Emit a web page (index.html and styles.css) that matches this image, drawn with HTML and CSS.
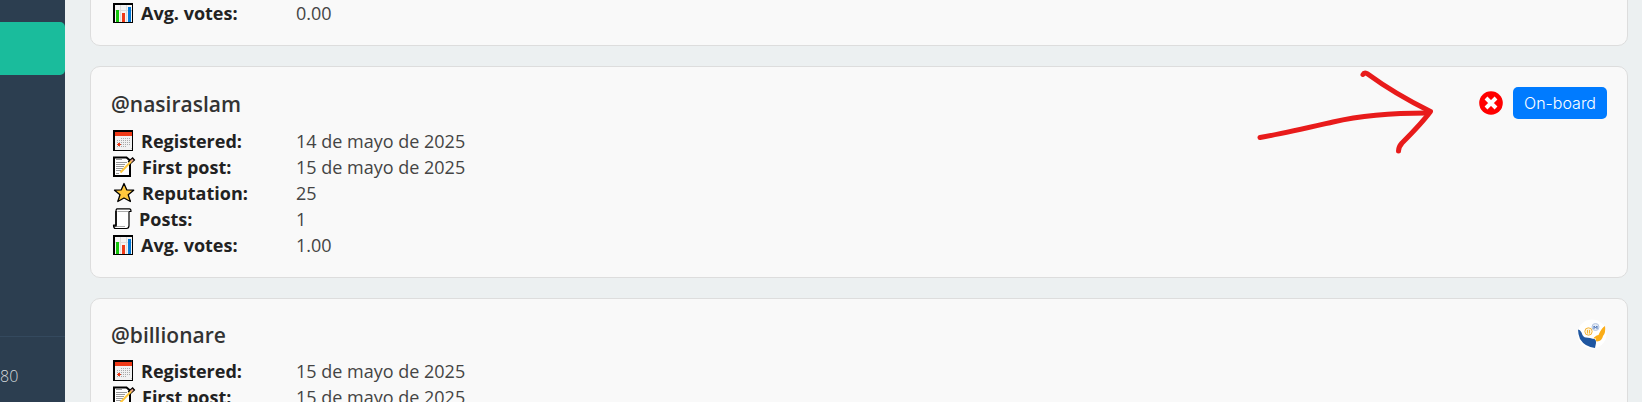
FILE: index.html
```
<!DOCTYPE html>
<html lang="es">
<head>
<meta charset="utf-8">
<title>Users</title>
<link rel="stylesheet" href="styles.css">
</head>
<body>
<svg class="sprite" aria-hidden="true">
  <symbol id="calendar" viewBox="0 0 24 22" shape-rendering="crispEdges">
    <path fill="#000" d="M2 0h20v21H2z"/>
    <path fill="#f1f1f1" d="M4 2h17v18H4z"/>
    <path fill="#f03a17" d="M4 2h17v4H4z"/>
    <path stroke="#aaa" stroke-dasharray="1 1" d="M10 8.500h10M6 10.500h14M6 12.500h14M6 14.500h14M6 16.500h10"/>
    <path fill="#f03a17" d="M6 14h4v1H6zM7 13h2v3H7z"/>
    <path fill="#ccc" d="M19 19h2v-2z"/>
  </symbol>
  <symbol id="memo" viewBox="0 0 25 22">
    <path fill="#fff" stroke="#000" stroke-width="2" d="M3 1.500h12.500L19 4.500V20H3z"/>
    <path stroke="#999" d="M5 3.500h6M5 6.500h11M5 8.500h9M5 10.500h8M5 12.500h7M5 14.500h5M5 17.500h3"/>
    <path stroke="#000" stroke-width="4" d="M18 7l5-4.500"/>
    <path stroke="#ffc83d" stroke-width="2" d="M9.500 16.500L20.500 5"/>
    <path stroke="#e8a58c" stroke-width="2" d="M20 5.500l2-2"/>
  </symbol>
  <symbol id="star" viewBox="0 0 25 22">
    <path fill="#ffc83d" stroke="#000" stroke-width="1.300" stroke-linejoin="round" d="M13 1.500l2.700 6.300 7 .4-5.500 4.500 2.200 6.800L13 16l-6.200 3.500L9 12.700 3.500 8.200l6.800-.4z"/>
  </symbol>
  <symbol id="scroll" viewBox="0 0 22 22">
    <path fill="#fff" stroke="#000" stroke-width="1.200" stroke-linejoin="round" d="M6 .8h12.500q1.500 0 1.500 2.700h-2v14q0 3-2.500 3H4.500Q2.500 20.500 2.500 17H5V3Q5 1.500 6 .8z"/>
    <path stroke="#000" stroke-width="1.500" fill="none" d="M5 3v15H2.500"/>
    <path stroke="#aaa" d="M6.500 3.500H17M6 18.500h8"/>
  </symbol>
  <symbol id="chart" viewBox="0 0 24 22" shape-rendering="crispEdges">
    <path fill="#000" d="M2 1h20v20H2z"/>
    <path fill="#f4f4f4" d="M4 3h17v17H4z"/>
    <path fill="#ddd" d="M9 3h1v17H9zM15 3h1v17h-1zM4 8h17v1H4z"/>
    <path fill="#16c60c" d="M5 8h3v12H5z"/>
    <path fill="#f03a17" d="M11 11h3v9h-3z"/>
    <path fill="#0078d7" d="M17 5h3v15h-3z"/>
  </symbol>
</svg>
<div class="layout">
  <nav class="sidebar">
    <a class="nav-active" href="#" aria-label="Users"></a>
    <div class="nav-footer">80</div>
  </nav>
  <main class="content">
    <section class="card card-first">
      <dl class="stats">
        <div class="stat"><dt><svg class="icon"><use href="#chart"/></svg>Avg. votes:</dt><dd>0.00</dd></div>
      </dl>
    </section>
    <section class="card">
      <header class="card-header">
        <h2>@nasiraslam</h2>
        <div class="actions">
          <svg class="reject" viewBox="0 0 24 24"><circle cx="12" cy="12" r="11.800" fill="#f00"/><path stroke="#fff" stroke-width="4" d="M7 7l10 10M17 7L7 17"/></svg>
          <button class="board" type="button">On-board</button>
        </div>
      </header>
      <dl class="stats">
        <div class="stat"><dt><svg class="icon"><use href="#calendar"/></svg>Registered:</dt><dd>14 de mayo de 2025</dd></div>
        <div class="stat"><dt><svg class="icon icon-wide"><use href="#memo"/></svg>First post:</dt><dd>15 de mayo de 2025</dd></div>
        <div class="stat"><dt><svg class="icon icon-wide"><use href="#star"/></svg>Reputation:</dt><dd>25</dd></div>
        <div class="stat"><dt><svg class="icon icon-narrow"><use href="#scroll"/></svg>Posts:</dt><dd>1</dd></div>
        <div class="stat"><dt><svg class="icon"><use href="#chart"/></svg>Avg. votes:</dt><dd>1.00</dd></div>
      </dl>
      <svg class="arrow" viewBox="0 0 180 90" fill="none" stroke="#e81b1b" stroke-width="5" stroke-linecap="round" stroke-linejoin="round">
        <path d="M4 70.500C25 67 55 60 77 55C107 48 138 46 171 46"/>
        <path d="M107 7.500q1-2 4-1Q139 27 174.500 44.500Q166 56 146 76Q142.500 80 142.500 84"/>
      </svg>
    </section>
    <section class="card">
      <header class="card-header">
        <h2>@billionare</h2>
        <svg class="badge" viewBox="0 0 30 30">
          <circle cx="15" cy="15" r="14.500" fill="#fff"/>
          <circle cx="11.500" cy="12.500" r="3.700" fill="#fff3d6" stroke="#f5b53a"/>
          <path stroke="#f5b53a" d="M10.500 11v3.500M12.500 11v3.500"/>
          <circle cx="18.500" cy="8" r="3.500" fill="#e3eaf5" stroke="#b5c6e2"/>
          <path fill="none" stroke="#4f77b8" d="M17 10V7l1.500 2L20 7v3"/>
          <path fill="#1f56a0" d="M1 10.500q2 0 3.500 3Q6 18.500 9 18.500L13 19q3 1 4.500 1 2 1 1.500 4l-1 5Q8 28 3 20 1 15 1 10.500z"/>
          <path fill="#fbad18" d="M28 7q1 7-2 10-1 5-6 5.500-2-.5-1-3l-2.500 0q1-2.500 5-3.500Q24.500 9 28 7z"/>
        </svg>
      </header>
      <dl class="stats">
        <div class="stat"><dt><svg class="icon"><use href="#calendar"/></svg>Registered:</dt><dd>15 de mayo de 2025</dd></div>
        <div class="stat"><dt><svg class="icon icon-wide"><use href="#memo"/></svg>First post:</dt><dd>15 de mayo de 2025</dd></div>
      </dl>
    </section>
  </main>
</div>
</body>
</html>
```
FILE: styles.css
```
* { box-sizing: border-box; }
body {
  margin: 0;
  background: #ecf0f1;
  color: #333;
  font-family: "Open Sans", "Noto Sans", sans-serif;
}
.sprite { position: absolute; width: 0; height: 0; }
.layout {
  display: flex;
  height: 100vh;
  overflow: hidden;
}
.sidebar {
  display: flex;
  flex-direction: column;
  justify-content: space-between;
  flex: 0 0 65px;
  padding-top: 22px;
  background: #2c3e50;
}
.nav-active {
  height: 53px;
  border-radius: 0 5px 5px 0;
  background: #1abc9c;
}
.nav-footer {
  height: 66px;
  padding-top: 28px;
  border-top: 1px solid #34495e;
  color: #d5dadd;
  font: 300 16px/22px "Open Sans", sans-serif;
}
.content {
  display: flex;
  flex: 1;
  flex-direction: column;
  gap: 20px;
  min-width: 0;
  padding: 0 14px 0 25px;
}
.card {
  position: relative;
  flex-shrink: 0;
  padding: 20px;
  border: 1px solid #ddd;
  border-radius: 10px;
  background: #f9f9f9;
}
.card-first { margin-top: -22px; }
.card-header {
  display: flex;
  align-items: center;
  justify-content: space-between;
  margin-bottom: 8px;
}
.card-header h2 {
  margin: 0;
  padding-top: 2px;
  font-size: 21px;
  font-weight: 600;
  line-height: 28px;
}
.actions {
  display: flex;
  align-items: center;
  gap: 10px;
}
.reject { width: 24px; height: 24px; }
.board {
  height: 32px;
  padding: 0 11px;
  border: 0;
  border-radius: 5px;
  background: #007bff;
  color: #fff;
  font: 300 16px/30px Inter, sans-serif;
}
.badge { width: 30px; height: 30px; }
.stats { margin: 0; }
.stat {
  display: grid;
  grid-template-columns: 185px 1fr;
  padding-top: 2px;
  font-size: 18px;
  line-height: 24px;
}
.stat dt {
  display: flex;
  align-items: center;
  gap: 6px;
  color: #222;
  font-weight: 700;
}
.stat dd { margin: 0; color: #444; }
.icon { width: 24px; height: 22px; }
.icon-wide { width: 25px; }
.icon-narrow { width: 22px; }
.arrow {
  position: absolute;
  top: 0;
  right: 191px;
  width: 180px;
  height: 90px;
}
```
